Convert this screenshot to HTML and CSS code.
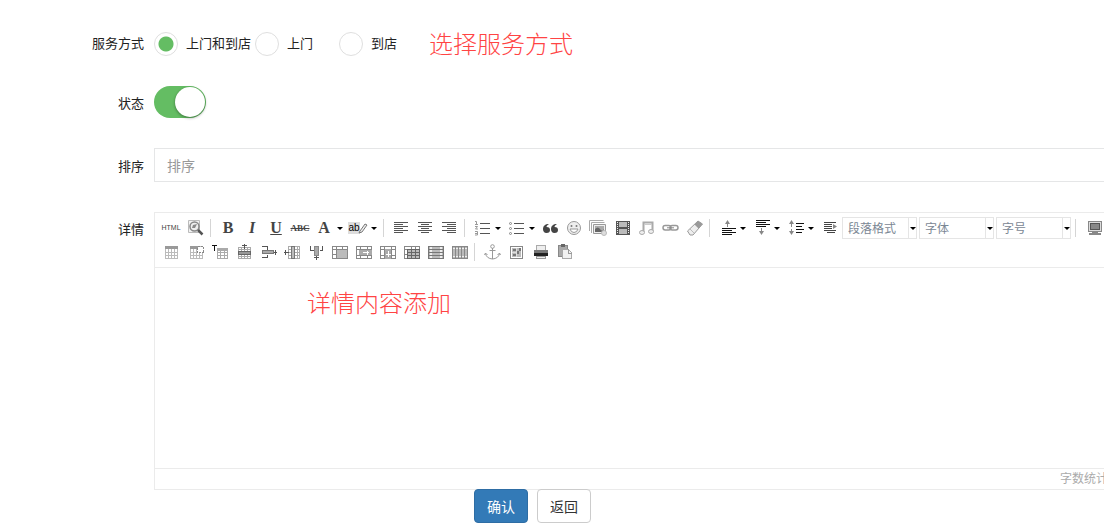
FILE: index.html
```
<!DOCTYPE html>
<html lang="zh-CN">
<head>
    <meta charset="UTF-8">
    <meta name="viewport" content="width=device-width, initial-scale=1.0">
    <title>服务编辑</title>
    <link rel="stylesheet" href="styles.css">
</head>
<body>
<form class="form">
    <div class="form-row" role="radiogroup" aria-labelledby="way-label">
        <span class="form-label" id="way-label">服务方式</span>
        <div class="radios">
            <label class="radio"><input type="radio" name="way" checked>上门和到店</label>
            <label class="radio"><input type="radio" name="way">上门</label>
            <label class="radio"><input type="radio" name="way">到店</label>
            <span class="note">选择服务方式</span>
        </div>
    </div>
    <div class="form-row">
        <label class="form-label form-label-low" for="status">状态</label>
        <input class="switch" type="checkbox" id="status" checked>
    </div>
    <div class="form-row">
        <label class="form-label form-label-low" for="sort">排序</label>
        <input class="text-input" type="text" id="sort" placeholder="排序">
    </div>
    <div class="form-row form-row-top">
        <span class="form-label" id="detail-label">详情</span>
        <div class="editor">
            <div class="toolbar">
                <div class="tools">
                    <button type="button" class="tool tool-html" title="HTML">HTML</button>
                    <button type="button" class="tool" title="预览"><svg viewBox="0 0 24 20"><path d="M5.500 2.500h11v12h-11z" fill="#f2f2f2" stroke="#bbb"/><circle cx="11.500" cy="8.500" r="4.500" fill="#eee" stroke="#888" stroke-width="1.500"/><path d="M9 10l1-3 4-1-2 4z" fill="#888"/><path d="M15 12l4.500 4.500" stroke="#555" stroke-width="2.500"/></svg></button>
                    <span class="sep"></span>
                    <button type="button" class="tool tool-serif" title="加粗"><b>B</b></button>
                    <button type="button" class="tool tool-serif" title="斜体"><i>I</i></button>
                    <button type="button" class="tool tool-serif" title="下划线"><u>U</u></button>
                    <button type="button" class="tool tool-strike" title="删除线"><s>ABC</s></button>
                    <button type="button" class="tool tool-serif tool-drop" title="字体颜色"><span>A</span></button>
                    <button type="button" class="tool tool-mark tool-drop" title="背景色"><span>ab</span><svg class="pen" viewBox="0 0 10 12"><path d="M2 9l5-7 2 1-5 7-3 1z" fill="#eee" stroke="#777"/></svg></button>
                    <span class="sep"></span>
                    <button type="button" class="tool" title="左对齐"><svg viewBox="0 0 24 20" class="crisp"><path d="M5 4.500h14M5 6.500h9M5 8.500h14M5 10.500h9M5 12.500h14M5 14.500h9" stroke="#555"/></svg></button>
                    <button type="button" class="tool" title="居中"><svg viewBox="0 0 24 20" class="crisp"><path d="M5 4.500h14M8 6.500h8M5 8.500h14M8 10.500h8M5 12.500h14M8 14.500h8" stroke="#555"/></svg></button>
                    <button type="button" class="tool" title="右对齐"><svg viewBox="0 0 24 20" class="crisp"><path d="M5 4.500h14M10 6.500h9M5 8.500h14M10 10.500h9M5 12.500h14M10 14.500h9" stroke="#555"/></svg></button>
                    <span class="sep"></span>
                    <button type="button" class="tool tool-drop" title="有序列表"><svg viewBox="0 0 24 20"><path d="M10 5.500h10M10 10.500h10M10 15.500h10" stroke="#555"/><path d="M5 3.500h1.500v3M5 6.500h3M5 8.500h2.500l-2 2.500h2.500M5 13.500h2.500v3.500h-2.500M5 15.500h2" stroke="#999"/></svg></button>
                    <button type="button" class="tool tool-drop" title="无序列表"><svg viewBox="0 0 24 20"><path d="M10 5.500h10M10 10.500h10M10 15.500h10" stroke="#555"/><g fill="#fff" stroke="#888"><circle cx="6.500" cy="5.500" r="1"/><circle cx="6.500" cy="10.500" r="1"/><circle cx="6.500" cy="15.500" r="1"/></g></svg></button>
                    <button type="button" class="tool" title="引用"><svg viewBox="0 0 24 20"><g fill="#444"><path d="M11 6C7 6 5 8 5 11c0 2 1 4 3.500 4s3.500-1 3.500-3-1-3-3.500-3c0-1 1-2 2.500-3z"/><path d="M19 6c-4 0-6 2-6 5 0 2 1 4 3.500 4s3.500-1 3.500-3-1-3-3.500-3c0-1 1-2 2.500-3z"/></g></svg></button>
                    <button type="button" class="tool" title="表情"><svg viewBox="0 0 24 20"><circle cx="12" cy="10" r="6.500" fill="#eee" stroke="#999"/><path d="M8 11q1 3.500 4 3.500t4-3.500z" fill="#fff" stroke="#999"/><circle cx="9.500" cy="8" r="1" fill="#777"/><circle cx="14.500" cy="8" r="1" fill="#777"/></svg></button>
                    <button type="button" class="tool" title="图片"><svg viewBox="0 0 24 20"><path d="M3.500 13v-10.500h14M5.500 15v-10.500h13" stroke="#aaa"/><path d="M7.500 6.500h12v9h-12z" fill="#eee" stroke="#999"/><path d="M9 8h9v6h-9z" fill="#aaa"/><path d="M9 11q3-3 5 0t4 0v3h-9z" fill="#666"/><circle cx="18" cy="15" r="2.500" fill="#ddd" stroke="#bbb"/></svg></button>
                    <button type="button" class="tool" title="视频"><svg viewBox="0 0 24 20" class="crisp"><path d="M6 3h14v14h-14z" fill="#555"/><path d="M9 4h8v5h-8zM9 11h8v5h-8z" fill="#bbb"/><path d="M7.500 4v12M18.500 4v12" stroke="#eee" stroke-dasharray="1 1"/></svg></button>
                    <button type="button" class="tool" title="音乐"><svg viewBox="0 0 24 20"><path d="M9.500 14V4.500h9v9" stroke="#aaa" stroke-width="2"/><path d="M10 6.500h8" stroke="#ccc"/><ellipse cx="8" cy="14.500" rx="2.500" ry="2" fill="#eee" stroke="#aaa"/><ellipse cx="17" cy="13.500" rx="2.500" ry="2" fill="#eee" stroke="#aaa"/></svg></button>
                    <button type="button" class="tool" title="超级链接"><svg viewBox="0 0 24 20"><g stroke="#999" stroke-width="1.500"><rect x="5" y="7.500" width="8" height="4.500" rx="2.200"/><rect x="12" y="7.500" width="8" height="4.500" rx="2.200"/></g><path d="M9 9.800h7" stroke="#888"/></svg></button>
                    <button type="button" class="tool" title="清除格式"><svg viewBox="0 0 24 20"><path d="M5.500 13L16 3l4.500 3L11 17H8z" fill="#eee" stroke="#999"/><path d="M12.500 6.500l3.500-3.500 4.500 3-4 4.500z" fill="#999"/><path d="M8 11l4 4" stroke="#bbb"/></svg></button>
                    <span class="sep"></span>
                    <button type="button" class="tool tool-drop" title="段前距"><svg viewBox="0 0 24 20"><path d="M7 10.500h14M7 12.500h10M7 14.500h14M7 16.500h10" stroke="#111"/><path d="M12.500 4v5" stroke="#888"/><path d="M10 6l2.500-4 2.500 4z" fill="#888"/></svg></button>
                    <button type="button" class="tool tool-drop" title="段后距"><svg viewBox="0 0 24 20"><path d="M7 2.500h14M7 4.500h10M7 6.500h14M7 8.500h10" stroke="#111"/><path d="M12.500 10v5" stroke="#888"/><path d="M10 13l2.500 4 2.500-4z" fill="#888"/></svg></button>
                    <button type="button" class="tool tool-drop" title="行间距"><svg viewBox="0 0 24 20"><path d="M13 5.500h8M13 8.500h6M13 11.500h8M13 14.500h6" stroke="#111"/><path d="M8.500 4v12" stroke="#888" stroke-dasharray="5 2"/><path d="M6 6l2.500-4 2.500 4zM6 13l2.500 4 2.500-4z" fill="#888"/></svg></button>
                    <button type="button" class="tool" title="首行缩进"><svg viewBox="0 0 24 20"><path d="M7 4.500h12M7 6.500h8M7 8.500h8M7 10.500h8M7 12.500h12M10 14.500h8" stroke="#444"/><path d="M16 6v5l4-2.500z" fill="#888"/></svg></button>
                    <span class="combo"><select aria-label="段落格式"><option>段落格式</option></select></span>
                    <span class="combo"><select aria-label="字体"><option>字体</option></select></span>
                    <span class="combo"><select aria-label="字号"><option>字号</option></select></span>
                    <span class="sep"></span>
                    <button type="button" class="tool" title="全屏"><svg viewBox="0 0 24 20" class="crisp"><path d="M7.500 3.500h13v10h-13z" fill="#ddd" stroke="#888"/><path d="M9.500 5.500h9v6h-9z" fill="#888" stroke="#555"/><path d="M11 14h6v1h3v2h-12v-2h3z" fill="#888"/></svg></button>
                </div>
                <div class="tools">
                    <button type="button" class="tool" title="插入表格"><svg viewBox="0 0 24 20" class="crisp"><path d="M6.500 4.500h12v12h-12zM6 10.500h12M6 13.500h12M9.500 7v9M12.500 7v9M15.500 7v9" fill="#fff" stroke="#bbb"/><path d="M6 4h13v3h-13z" fill="#999"/></svg></button>
                    <button type="button" class="tool" title="表格属性"><svg viewBox="0 0 24 20" class="crisp"><path d="M7.500 4.500h12v12h-12zM7 10.500h12M7 13.500h12M10.500 7v9M13.500 7v9M16.500 7v9" fill="#fff" stroke="#bbb"/><path d="M7 4h8v3h-8z" fill="#999"/><path d="M14.500 4.500h6v6h-6z" fill="#fff" stroke="#888" stroke-dasharray="2 1"/></svg></button>
                    <button type="button" class="tool" title="表格前插入行"><svg viewBox="0 0 24 20" class="crisp"><path d="M10.500 6.500h10v10h-10zM10 10.500h11M10 13.500h11M13.500 7v9M17.500 9v8" fill="#fff" stroke="#aaa"/><path d="M10 6h11v3h-11z" fill="#aaa"/><path d="M5 3.500h5M7.500 3v6" stroke="#111"/></svg></button>
                    <button type="button" class="tool" title="前插入行"><svg viewBox="0 0 24 20" class="crisp"><path d="M7.500 5.500h12v11h-12zM7 7.500h12M7 14.500h12M10.500 5v11M13.500 5v11M16.500 5v11" fill="#fff" stroke="#aaa"/><path d="M7.500 9.500h12v3h-12z" fill="#999" stroke="#666"/><path d="M13.500 2v5M11 3.500h5" stroke="#555"/></svg></button>
                    <button type="button" class="tool" title="右合并单元格"><svg viewBox="0 0 24 20" class="crisp"><path d="M7 4.500h5.500v3M7 15.500h5.500v-3M18 10.500h4M20.500 8v5" stroke="#555"/><path d="M7.500 8.500h11v3h-11z" fill="#aaa" stroke="#777"/></svg></button>
                    <button type="button" class="tool" title="前插入列"><svg viewBox="0 0 24 20" class="crisp"><path d="M9.500 4.500h11v12h-11zM9 7.500h12M9 10.500h12M9 13.500h12M18.500 4v12" fill="#fff" stroke="#aaa"/><path d="M12.500 4.500h3v12h-3z" fill="#bbb" stroke="#777"/><path d="M5 10.500h5M6.500 8v5" stroke="#555"/></svg></button>
                    <button type="button" class="tool" title="下合并单元格"><svg viewBox="0 0 24 20" class="crisp"><path d="M7.500 4v4.500h3M19.500 4v4.500h-3M13.500 13v5M11 15.500h5" stroke="#555"/><path d="M11.500 4.500h4v9h-4z" fill="#aaa" stroke="#888"/></svg></button>
                    <button type="button" class="tool" title="删除行"><svg viewBox="0 0 24 20" class="crisp"><path d="M5.500 4.500h15v12h-15zM5 7.500h15M5 12.500h4M9.500 4v12M15.500 4v3" fill="#fff" stroke="#888"/><path d="M9.500 7.500h11v9h-11z" fill="#bbb" stroke="#888"/></svg></button>
                    <button type="button" class="tool" title="右拆分"><svg viewBox="0 0 24 20" class="crisp"><path d="M5.500 4.500h15v12h-15zM5 7.500h15M5 13.500h15M9.500 4v12M16.500 4v12" fill="#fff" stroke="#888"/><path d="M8 8h13v5h-13z" fill="#aaa"/><path d="M12 10.500h6M16.500 8.500v4" stroke="#fff"/></svg></button>
                    <button type="button" class="tool" title="下拆分"><svg viewBox="0 0 24 20" class="crisp"><path d="M5.500 4.500h15v12h-15zM5 7.500h15M5 13.500h15M9.500 4v12M16.500 4v12" fill="#fff" stroke="#888"/><path d="M10 7h6v10h-6z" fill="#aaa"/><path d="M13.500 9v6M11 12.500h5" stroke="#fff"/></svg></button>
                    <button type="button" class="tool" title="拆分单元格"><svg viewBox="0 0 24 20" class="crisp"><path d="M5.500 4.500h15v12h-15zM5 7.500h4M5 12.500h4M12.500 4v3M16.500 4v3" fill="#fff" stroke="#888"/><path d="M8.500 7.500h12v9h-12zM8 10.500h12M8 13.500h12M12.500 7v9M16.500 7v9" fill="#bbb" stroke="#666"/></svg></button>
                    <button type="button" class="tool" title="拆分成行"><svg viewBox="0 0 24 20" class="crisp"><path d="M5.500 4.500h15v12h-15z" fill="#bbb" stroke="#777"/><path d="M7 5h2v11h-2zM17 5h2v11h-2z" fill="#eee"/><path d="M5 7.500h15M5 10.500h15M5 13.500h15" stroke="#777"/></svg></button>
                    <button type="button" class="tool" title="拆分成列"><svg viewBox="0 0 24 20" class="crisp"><path d="M5.500 4.500h15v12h-15z" fill="#bbb" stroke="#888"/><path d="M6 6h14v1h-14zM6 14h14v1h-14z" fill="#eee"/><path d="M8.500 4v12M11.500 4v12M14.500 4v12M17.500 4v12" stroke="#888"/></svg></button>
                    <span class="sep"></span>
                    <button type="button" class="tool" title="锚点"><svg viewBox="0 0 24 20"><circle cx="12.500" cy="4.500" r="1.800" fill="#fff" stroke="#999"/><path d="M12.500 6v11M9.500 8.500h6M5.500 11.500q1 5 7 5.500 6-.5 7-5.500M4.500 13l1-2 2 2M17.500 13l2-2 1 2" stroke="#999"/></svg></button>
                    <button type="button" class="tool" title="地图"><svg viewBox="0 0 24 20" class="crisp"><path d="M6.500 4.500h12v12h-12z" fill="#fff" stroke="#888"/><path d="M8 6h9v9h-9z" fill="#bbb"/><path d="M9 7h3v2h-3zM13 9h2v3h-2zM9 12h3v2h-3zM15 6h2v3h-2z" fill="#777"/><path d="M12.500 6v9M8 10.500h4" stroke="#ddd"/></svg></button>
                    <button type="button" class="tool" title="打印"><svg viewBox="0 0 24 20" class="crisp"><path d="M8.500 3.500h9v5h-9z" fill="#eee" stroke="#aaa"/><path d="M6 8h14v3h-14z" fill="#777"/><path d="M6 11h14v3h-14z" fill="#222"/><path d="M8.500 14.500h9v2h-9z" fill="#eee" stroke="#999"/></svg></button>
                    <button type="button" class="tool" title="粘贴"><svg viewBox="0 0 24 20" class="crisp"><path d="M6.500 3.500h9v11h-9z" fill="#aaa" stroke="#888"/><path d="M9 2h4v3h-4z" fill="#666"/><path d="M10.500 7.500h6l3 3v6h-9z" fill="#f2f2f2" stroke="#aaa"/><path d="M16.500 7v4h3" stroke="#999"/></svg></button>
                </div>
            </div>
            <div class="editor-body" contenteditable="true" role="textbox" aria-labelledby="detail-label" spellcheck="false"><p class="note">详情内容添加</p></div>
            <div class="editor-status">字数统计</div>
        </div>
    </div>
    <div class="actions">
        <button type="submit" class="btn btn-primary">确认</button>
        <button type="button" class="btn">返回</button>
    </div>
</form>
</body>
</html>
```
FILE: styles.css
```
* {
    box-sizing: border-box;
}

body {
    margin: 0;
    overflow-x: hidden;
    background: #fff;
    color: #222;
    font: 13px/20px "Liberation Sans", "Noto Sans CJK SC", sans-serif;
}

button,
input,
select {
    font-family: inherit;
}

/* the form runs a little past the right edge of the frame */
.form {
    width: calc(100% + 10px);
    padding-top: 32px;
}

.form-row {
    display: flex;
    align-items: center;
    gap: 10px;
    margin-bottom: 30px;
}

.form-row-top {
    align-items: flex-start;
    margin-bottom: 0;
}

.form-label {
    flex: 0 0 144px;
    text-align: right;
}

.form-label-low {
    padding-top: 3px;
}

.form-row-top .form-label {
    line-height: 36px;
}

.radios {
    display: flex;
    align-items: center;
    gap: 4px;
    height: 24px;
}

.radio {
    display: flex;
    align-items: center;
    gap: 8px;
    min-width: 80px;
}

.radio input {
    appearance: none;
    width: 24px;
    height: 24px;
    margin: 0;
    border: 1px solid #dfdfdf;
    border-radius: 50%;
    background: #fff;
}

.radio input:checked {
    background: radial-gradient(circle, #64bd63 7px, #fff 8px);
}

.note {
    margin: 0;
    color: #f44;
    font-size: 24px;
    font-weight: 300;
    line-height: 32px;
}

.radios .note {
    margin-left: 6px;
    padding-top: 2px;
}

.switch {
    appearance: none;
    width: 52px;
    height: 32px;
    margin: 0;
    padding: 1px;
    border-radius: 16px;
    background: #dfdfdf;
}

.switch::before {
    content: "";
    display: block;
    width: 30px;
    height: 30px;
    border-radius: 50%;
    background: #fff;
    box-shadow: 0 1px 3px rgba(0, 0, 0, 0.4);
}

.switch:checked {
    background: #64bd63;
}

.switch:checked::before {
    margin-left: auto;
}

.text-input {
    flex: 1;
    height: 34px;
    padding: 2px 12px 0;
    border: 1px solid #e5e6e7;
    background: #fff;
    font-size: 14px;
}

.text-input::placeholder {
    color: #999;
}

.editor {
    flex: 1;
    min-width: 0;
    border: 1px solid #ebebeb;
}

.toolbar {
    padding: 3px 4px;
    border-bottom: 1px solid #ebebeb;
}

.tools {
    display: flex;
    align-items: center;
    height: 24px;
}

.tool {
    display: flex;
    flex: 0 0 24px;
    align-items: center;
    justify-content: center;
    position: relative;
    height: 20px;
    padding: 0;
    border: 0;
    background: none;
    color: #444;
    line-height: 20px;
}

.tool svg {
    width: 24px;
    height: 20px;
    fill: none;
}

.crisp {
    shape-rendering: crispEdges;
}

.tool-html {
    font-size: 7px;
}

.tool-serif {
    font-family: "Liberation Serif", serif;
    font-size: 16px;
    font-weight: bold;
}

.tool-strike {
    font-family: "Liberation Serif", serif;
    font-size: 9px;
    font-weight: bold;
}

.tool-mark {
    font-size: 10px;
}

.tool-mark span {
    background: #ddd;
    color: #000;
    line-height: 12px;
}

.tool .pen {
    width: 10px;
    height: 12px;
    margin-left: -2px;
}

.tool-drop {
    flex-basis: 34px;
    padding-right: 10px;
}

.tool-drop::after,
.combo::after {
    content: "";
    position: absolute;
    border: 3px solid transparent;
    border-top-color: #000;
    border-bottom: 0;
    pointer-events: none;
}

.tool-drop::after {
    top: 9px;
    right: 3px;
}

.sep {
    flex: 0 0 9px;
    height: 18px;
    background: linear-gradient(#d5d5d5, #d5d5d5) 3px 0 / 1px 100% no-repeat;
}

.combo {
    flex: 0 0 75px;
    position: relative;
    height: 22px;
    margin: 0 1px;
    border: 1px solid #e5e5e5;
}

.combo::after {
    top: 9px;
    right: 0;
}

.combo select {
    appearance: none;
    display: block;
    width: 66px;
    height: 20px;
    padding: 1px 5px 0;
    border: 0;
    border-right: 1px solid #e5e5e5;
    border-radius: 0;
    background: none;
    color: #7b8794;
    font-size: 12px;
}

.editor-body {
    min-height: 200px;
    padding: 20px 152px;
    outline: none;
}

.editor-status {
    padding-right: 5px;
    border-top: 1px solid #ebebeb;
    color: #aaa;
    font-size: 12px;
    text-align: right;
}

.actions {
    display: flex;
    gap: 9px;
    margin-top: -1px;
    padding-left: 474px;
}

.btn {
    height: 34px;
    padding: 0 12px;
    border: 1px solid #ccc;
    border-radius: 4px;
    background: #fff;
    color: #333;
    font-size: 14px;
}

.btn-primary {
    border-color: #2e6da4;
    background: #337ab7;
    color: #fff;
}
```
